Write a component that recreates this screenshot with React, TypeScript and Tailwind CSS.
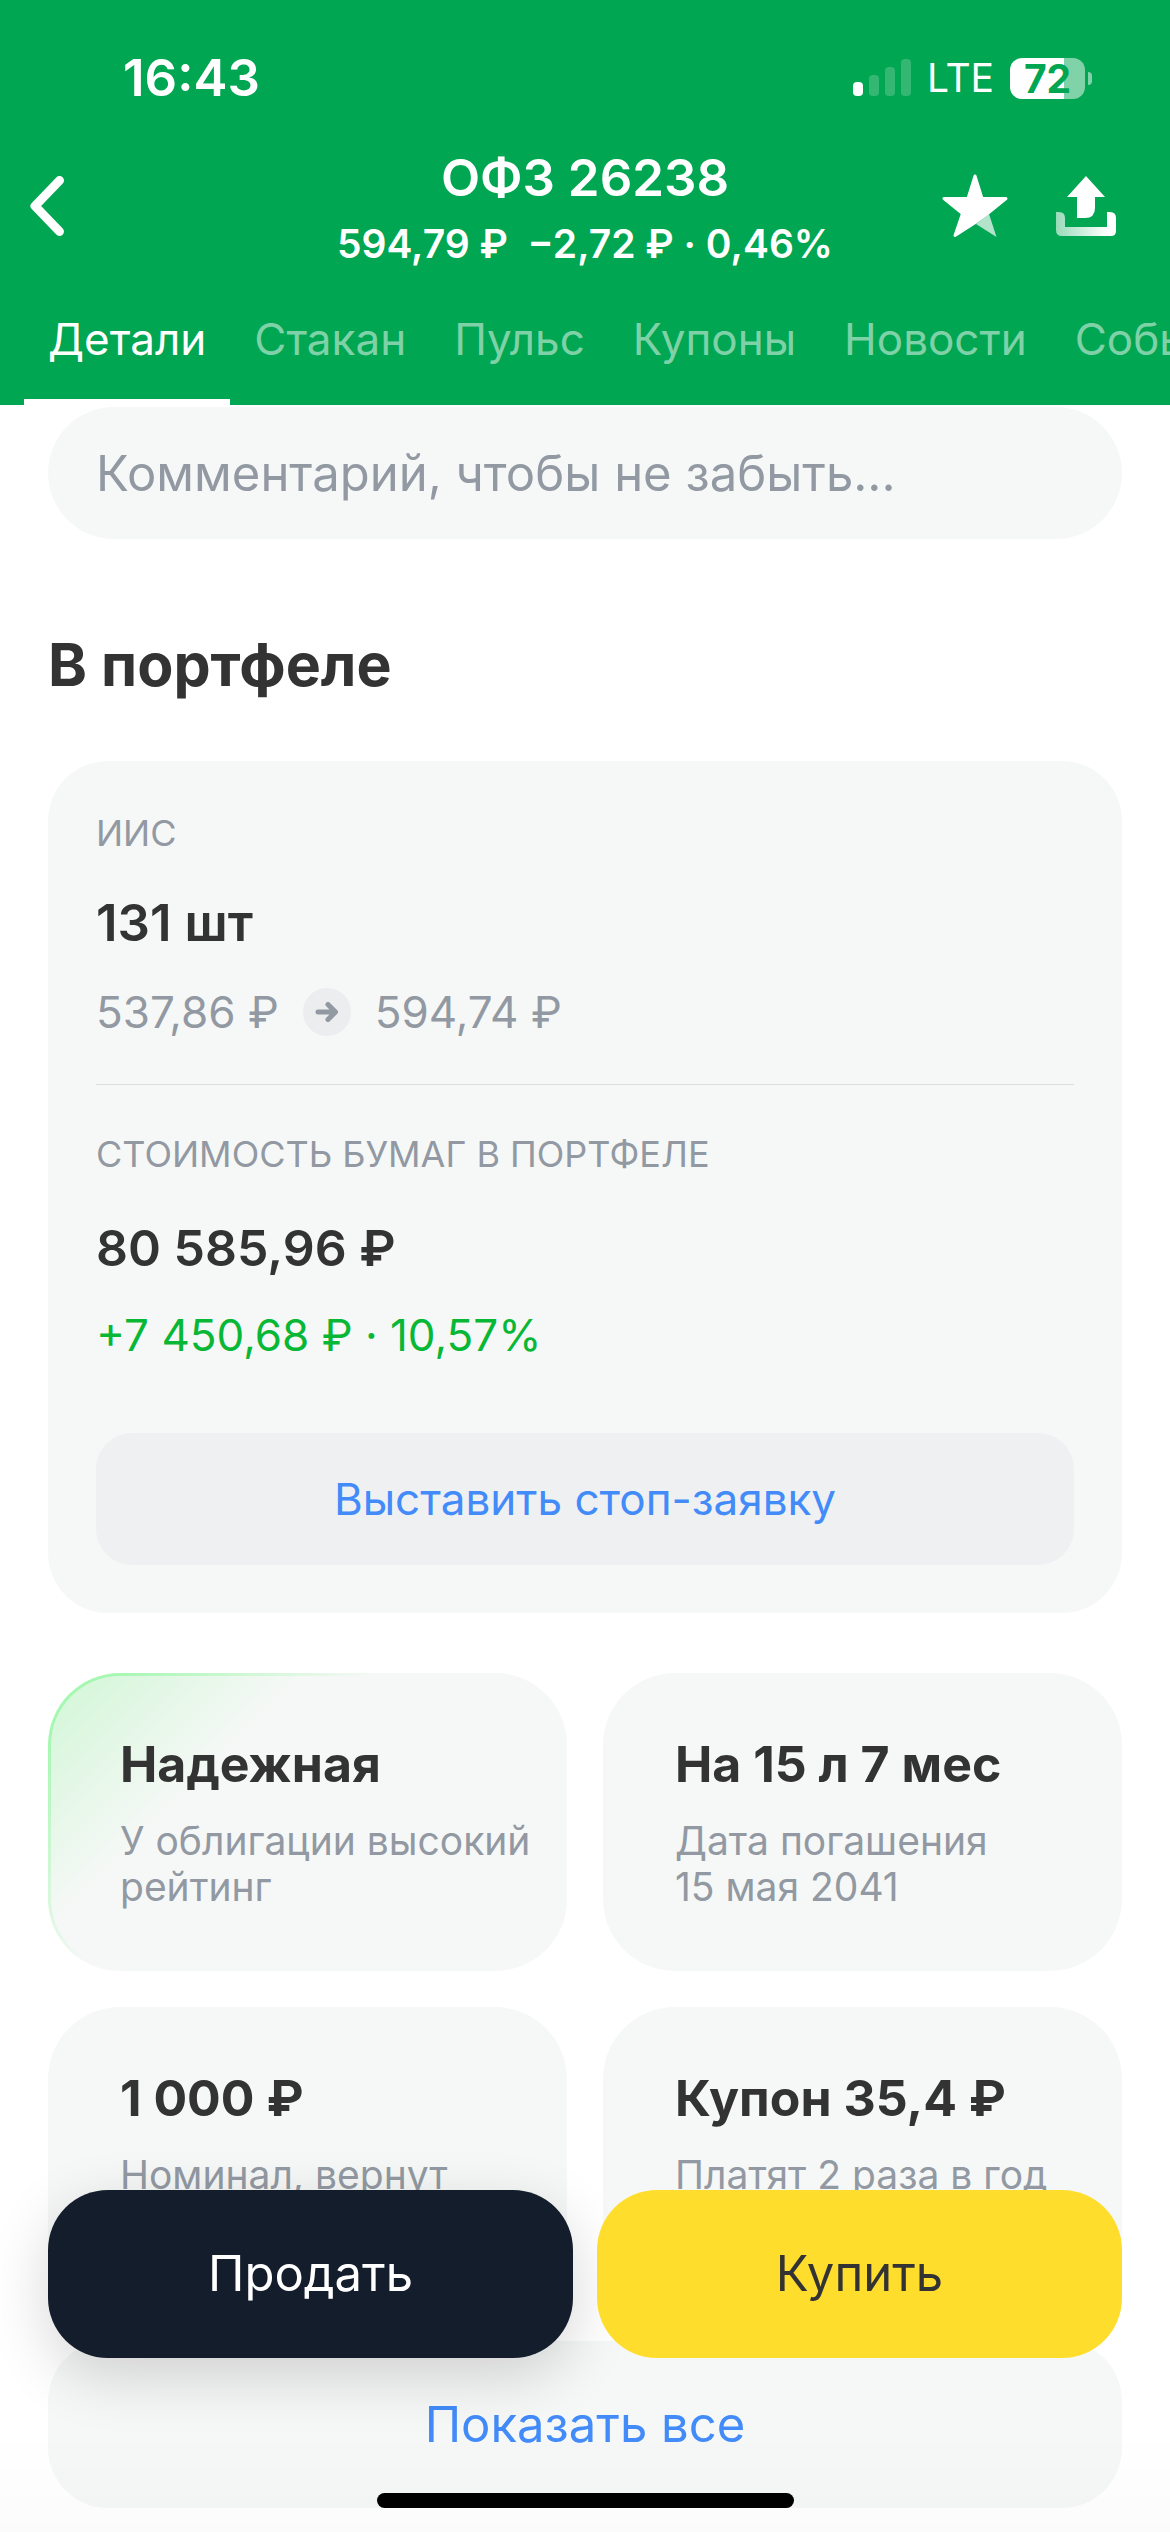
import React, { useState } from 'react';

const TABS = ['Детали', 'Стакан', 'Пульс', 'Купоны', 'Новости', 'События'];

const FACTS = [
  { title: 'Надежная', lines: ['У облигации высокий', 'рейтинг'], highlighted: true },
  { title: 'На 15 л 7 мес', lines: ['Дата погашения', '15 мая 2041'] },
  { title: '1 000 ₽', lines: ['Номинал, вернут'] },
  { title: 'Купон 35,4 ₽', lines: ['Платят 2 раза в год'] },
];

function StatusBar() {
  return (
    <div className="flex items-center justify-between pt-12 pr-[78px] pl-[123px] text-white">
      <span className="text-[51px] leading-[60px] font-semibold">16:43</span>
      <div className="flex items-center">
        <svg width="60" height="38" viewBox="0 0 60 38" fill="white" aria-hidden="true">
          <rect x="0" y="23" width="10" height="14" rx="4" />
          <rect x="16" y="16" width="10" height="21" rx="4" opacity="0.2" />
          <rect x="32" y="8" width="10" height="29" rx="4" opacity="0.2" />
          <rect x="48" y="0" width="10" height="37" rx="4" opacity="0.2" />
        </svg>
        <span className="ml-3.5 text-[39px] leading-[60px]">LTE</span>
        <div className="ml-4 flex h-[41px] w-[75px] items-center justify-center rounded-xl bg-linear-to-r from-white from-72% to-white/50 to-72% text-[39px] leading-[41px] font-bold text-[#00a651]">
          72
        </div>
        <div className="ml-[3px] h-[13px] w-1 rounded-r-full bg-white/50" />
      </div>
    </div>
  );
}

function StarIcon() {
  return (
    <svg width="66" height="64" viewBox="0 0 66 64" fill="white" stroke="white" strokeWidth="3" strokeLinejoin="round" aria-hidden="true">
      <path d="M33 2 L40 24.500 H64 L45.500 39.500 L32.500 49 L13 61.500 L20.500 39.500 L2 24.500 H26 Z" />
      <path d="M47 40 L54.500 63 L34 50 Z" stroke="none" opacity="0.7" />
    </svg>
  );
}

function ShareIcon() {
  return (
    <svg width="60" height="60" viewBox="0 0 60 60" fill="white" aria-hidden="true">
      <defs>
        <linearGradient id="tray" x1="0" y1="0" x2="1" y2="0">
          <stop offset="0" stopColor="white" stopOpacity="0.6" />
          <stop offset="0.85" stopColor="white" />
        </linearGradient>
      </defs>
      <path d="M30 0 L49 21 H39 V32 Q39 42 29 42 H21 V21 H11 Z" />
      <path d="M0 36 H3 Q9 36 9 42 V51 H51 V36 H54 Q60 36 60 42 V55 Q60 60 55 60 H6 Q0 60 0 54 Z" fill="url(#tray)" />
    </svg>
  );
}

function Header() {
  const [active, setActive] = useState(TABS[0]);

  return (
    <header className="bg-[#00a651] text-white">
      <StatusBar />
      <div className="mt-10 grid grid-cols-[1fr_auto_1fr] items-center px-[54px]">
        <button type="button" aria-label="Назад" className="-ml-6 justify-self-start pb-1">
          <svg width="36" height="62" viewBox="0 0 36 62" fill="none" stroke="white" strokeWidth="9" strokeLinecap="round" strokeLinejoin="round">
            <path d="M29.500 5.500 L5 31 L29.500 56.500" />
          </svg>
        </button>
        <div className="text-center">
          <h1 className="text-[51px] leading-[60px] font-semibold">ОФЗ 26238</h1>
          <p className="mt-3 text-[39px] leading-[48px] font-semibold whitespace-pre">594,79 ₽  −2,72 ₽ · 0,46%</p>
        </div>
        <div className="flex items-center gap-12 justify-self-end pb-1">
          <button type="button" aria-label="В избранное"><StarIcon /></button>
          <button type="button" aria-label="Поделиться"><ShareIcon /></button>
        </div>
      </div>
      <nav className="flex overflow-hidden pl-6">
        {TABS.map((tab) => (
          <button
            key={tab}
            type="button"
            onClick={() => setActive(tab)}
            className={`shrink-0 border-b-6 px-6 pt-11 pb-[33px] text-[44px] leading-[54px] ${
              tab === active ? 'border-white text-white' : 'border-transparent text-white/50'
            }`}
          >
            {tab}
          </button>
        ))}
      </nav>
    </header>
  );
}

function Position() {
  return (
    <section className="mt-[66px]">
      <h2 className="text-[59px] leading-[60px] font-bold">В портфеле</h2>
      <div className="mt-[66px] rounded-[60px] bg-[#f6f8f7] p-12">
        <p className="text-[36px] leading-[48px] text-[#9299a2]">ИИС</p>
        <p className="mt-9 text-[51px] leading-[60px] font-semibold">131 шт</p>
        <div className="mt-8 flex items-center text-[44px] leading-[54px] text-[#9299a2]">
          <span>537,86 ₽</span>
          <span className="mx-6 flex size-12 items-center justify-center rounded-full bg-[#ebedee]">
            <svg width="24" height="20" viewBox="0 0 24 20" fill="none" stroke="#9299a2" strokeWidth="5" strokeLinecap="round" strokeLinejoin="round" aria-hidden="true">
              <path d="M3 10 H20 M13 2.500 L20.500 10 L13 17.500" />
            </svg>
          </span>
          <span>594,74 ₽</span>
        </div>
        <hr className="mt-[45px] border-[#dcdedf]" />
        <p className="mt-[45px] text-[36px] leading-[48px] text-[#9299a2]">СТОИМОСТЬ БУМАГ В ПОРТФЕЛЕ</p>
        <p className="mt-10 text-[50px] leading-[60px] font-semibold">80 585,96 ₽</p>
        <p className="mt-[30px] text-[44px] leading-[54px] text-[#08b735]">+7 450,68 ₽ · 10,57%</p>
        <button type="button" className="mt-[71px] h-[132px] w-full rounded-[36px] bg-[#eff0f2] text-[44px] leading-[54px] text-[#428bf9]">
          Выставить стоп-заявку
        </button>
      </div>
    </section>
  );
}

function Facts() {
  return (
    <section className="mt-[60px] grid grid-cols-2 gap-9">
      {FACTS.map((fact) => (
        <article
          key={fact.title}
          className={`min-h-[298px] rounded-[72px] border-3 border-transparent px-[69px] pt-[58px] ${
            fact.highlighted
              ? '[background:linear-gradient(135deg,#d6f7da_4%,#f6f8f7_32%)_padding-box,linear-gradient(135deg,#a6f7b1_8%,#f6f8f7_40%)_border-box]'
              : 'bg-[#f6f8f7]'
          }`}
        >
          <h3 className="text-[50px] leading-[60px] font-bold whitespace-nowrap">{fact.title}</h3>
          <p className="mt-6 text-[39px] leading-[46px] whitespace-nowrap text-[#9299a2]">
            {fact.lines.map((line) => (
              <span key={line} className="block">{line}</span>
            ))}
          </p>
        </article>
      ))}
    </section>
  );
}

// Floating bar, stays above the scrolled content
function TradeBar() {
  return (
    <div className="fixed inset-x-0 bottom-0 flex flex-col items-center bg-linear-to-t from-black/[0.015] to-transparent to-30% px-12 pb-6">
      <div className="grid w-full grid-cols-2 gap-6 text-[49px] leading-[60px]">
        <button type="button" className="h-[168px] rounded-[60px] bg-[#141d2c] text-white shadow-[0_18px_60px_rgba(0,0,0,0.16)]">
          Продать
        </button>
        <button type="button" className="relative h-[168px] rounded-[60px] bg-[#ffdd2d] text-[#333333]">
          Купить
        </button>
      </div>
      <div className="mt-[135px] h-[15px] w-[417px] rounded-full bg-black" />
    </div>
  );
}

export default function App() {
  return (
    <div className="min-h-screen bg-white font-['Inter','Noto_Sans',sans-serif] text-[#333333]">
      <Header />
      <main className="px-12 pt-0.5 pb-6">
        <input
          type="text"
          aria-label="Комментарий"
          placeholder="Комментарий, чтобы не забыть..."
          className="block h-[132px] w-full rounded-full bg-[#f6f8f7] px-12 text-[49px] leading-[60px] outline-none placeholder:text-[#9299a2] placeholder:opacity-100"
        />
        <div className="pt-[30px]">
          <Position />
          <Facts />
          <button type="button" className="mt-9 h-[167px] w-full rounded-[60px] bg-[#f6f8f7] text-[49px] leading-[60px] text-[#428bf9]">
            Показать все
          </button>
        </div>
      </main>
      <TradeBar />
    </div>
  );
}
